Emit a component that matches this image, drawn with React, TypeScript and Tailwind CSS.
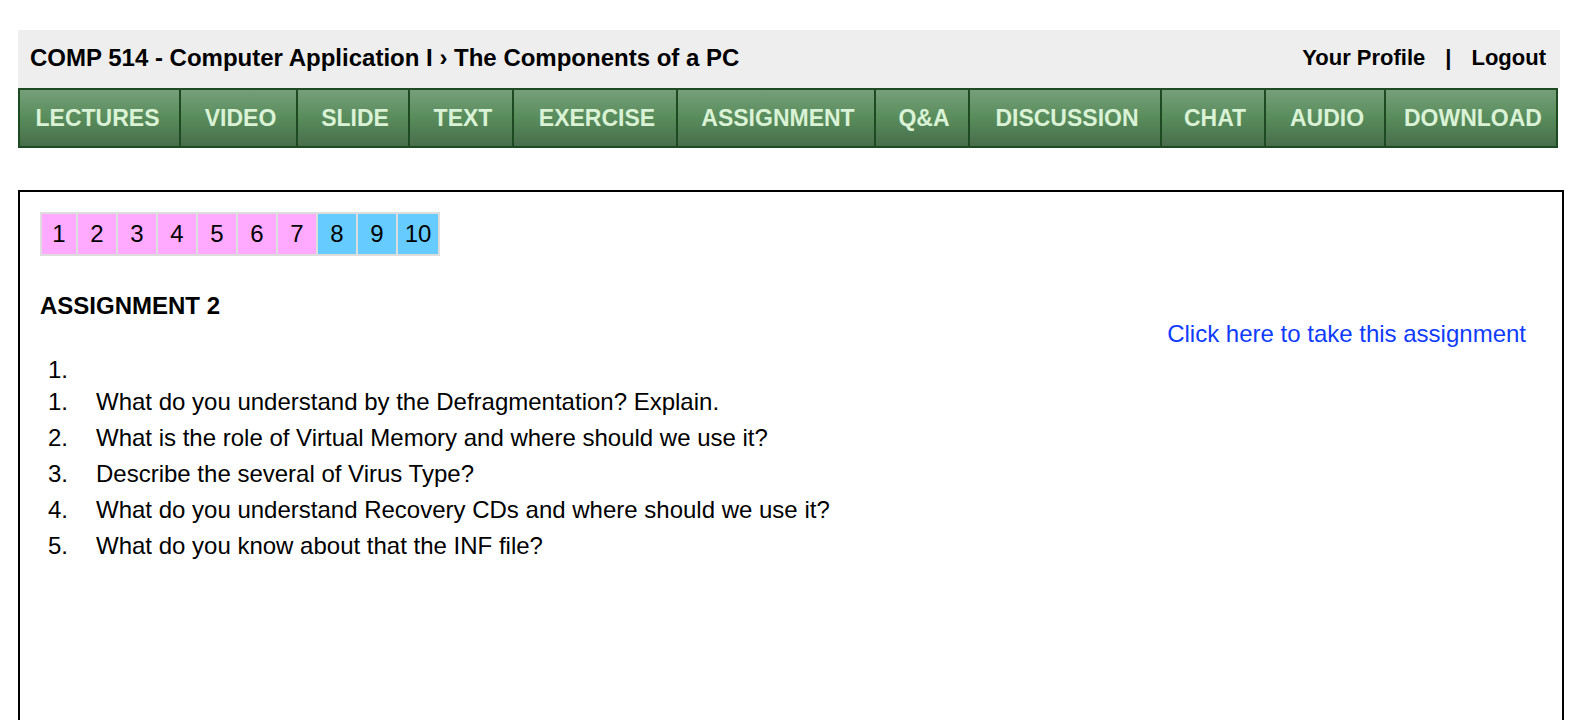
const sections = [
  'LECTURES',
  'VIDEO',
  'SLIDE',
  'TEXT',
  'EXERCISE',
  'ASSIGNMENT',
  'Q&A',
  'DISCUSSION',
  'CHAT',
  'AUDIO',
  'DOWNLOAD',
];

const pages = [
  { number: 1, style: 'w-[34px] bg-[#ffaaff]' },
  { number: 2, style: 'w-[38px] bg-[#ffaaff]' },
  { number: 3, style: 'w-[38px] bg-[#ffaaff]' },
  { number: 4, style: 'w-[38px] bg-[#ffaaff]' },
  { number: 5, style: 'w-[38px] bg-[#ffaaff]' },
  { number: 6, style: 'w-[38px] bg-[#ffaaff]' },
  { number: 7, style: 'w-[38px] bg-[#ffaaff]' },
  { number: 8, style: 'w-[38px] bg-[#66ccff]' },
  { number: 9, style: 'w-[38px] bg-[#66ccff]' },
  { number: 10, style: 'w-10 bg-[#66ccff]' },
];

const questions = [
  'What do you understand by the Defragmentation? Explain.',
  'What is the role of Virtual Memory and where should we use it?',
  'Describe the several of Virus Type?',
  'What do you understand Recovery CDs and where should we use it?',
  'What do you know about that the INF file?',
];

function Header() {
  return (
    <header className="mr-1 flex h-[58px] items-center justify-between bg-[#eeeeee] pr-[14px] pb-[2px] pl-3 font-bold">
      <h1>COMP 514 - Computer Application I › The Components of a PC</h1>
      <div className="flex gap-5 text-[22px]">
        <a href="#profile">Your Profile</a>
        <span>|</span>
        <a href="#logout">Logout</a>
      </div>
    </header>
  );
}

function SectionNav() {
  return (
    <nav className="mr-[6px] grid h-[60px] grid-cols-[161fr_117fr_112fr_104fr_164fr_198fr_94fr_192fr_104fr_120fr_172fr] border-l-2 border-[#1d4a20]">
      {sections.map((name) => (
        <a
          key={name}
          href="#section"
          className="flex items-center justify-center border-y-2 border-r-2 border-[#1d4a20] bg-linear-to-b from-[#769f7a] via-[#588c5b] to-[#486e4b] pl-1 text-[23px] font-bold text-[#daf2d6] first:pr-1 first:pl-0"
        >
          {name}
        </a>
      ))}
    </nav>
  );
}

export default function App() {
  return (
    <div className="flex min-h-screen flex-col bg-white pt-[30px] pr-6 pl-[18px] font-['Liberation_Sans',Arial,sans-serif] text-[24px] leading-7 text-black">
      <Header />
      <SectionNav />
      <main className="mt-[42px] flex-1 border-2 border-b-0 border-black p-5">
        <div className="flex w-fit gap-[2px] bg-[#dddddd] p-[2px]">
          {pages.map((page) => (
            <a
              key={page.number}
              href="#page"
              className={`flex h-10 items-center justify-center ${page.style}`}
            >
              {page.number}
            </a>
          ))}
        </div>
        <h2 className="mt-9 font-bold">ASSIGNMENT 2</h2>
        <div className="flex justify-end pr-4">
          <a href="#take" className="text-[#0f3cff]">
            Click here to take this assignment
          </a>
        </div>
        <div className="mt-2 pl-2">
          <p>1.</p>
          <ol className="leading-9">
            {questions.map((question, index) => (
              <li key={question} className="flex">
                <span className="w-12 shrink-0">{index + 1}.</span>
                <span>{question}</span>
              </li>
            ))}
          </ol>
        </div>
      </main>
    </div>
  );
}
